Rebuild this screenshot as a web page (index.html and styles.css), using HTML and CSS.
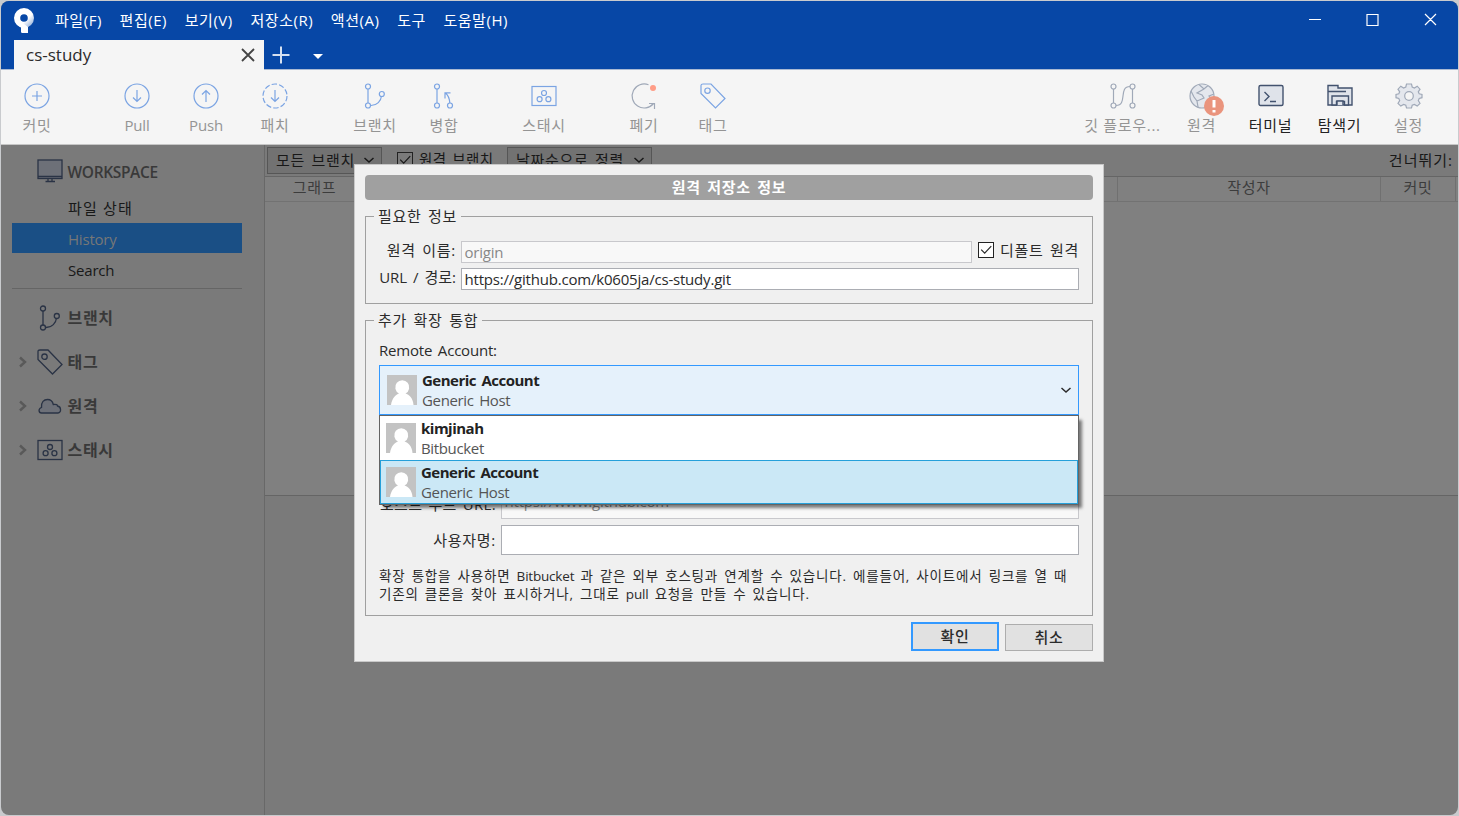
FILE: index.html
```html
<!DOCTYPE html>
<html lang="ko">
<head>
    <meta charset="UTF-8">
    <meta name="viewport" content="width=device-width, initial-scale=1.0">
    <title>cs-study</title>
    <link rel="stylesheet" href="styles.css">
</head>
<body>
    <!-- Shared icons -->
    <svg class="defs" width="0" height="0">
        <symbol id="branch" viewBox="0 0 26 26">
            <path d="M6 6v14M9 22.500C15 22.500 19 18 19.500 13"/>
            <circle cx="6" cy="3.500" r="2.500"/><circle cx="6" cy="22.500" r="2.500"/><circle cx="19.800" cy="11" r="2.500"/>
        </symbol>
        <symbol id="tag" viewBox="0 0 26 26">
            <path class="fill" d="M1 2.500Q1 1 3 1H11L25 15.500L15.500 25L1 10.500Z"/>
            <circle cx="7.500" cy="7.700" r="2.700"/>
        </symbol>
        <symbol id="stash" viewBox="0 0 26 26">
            <rect class="fill" x="1" y="3.500" width="24" height="19"/>
            <circle cx="13" cy="10" r="2.500"/><circle cx="8.600" cy="16.200" r="2.500"/><circle cx="17.400" cy="16.200" r="2.500"/>
        </symbol>
        <symbol id="avatar" viewBox="0 0 30 30">
            <rect width="30" height="30" fill="#c3c3c3"/>
            <path d="M4 30C5 23 9 19.500 12 18.500A7 7 0 1 1 18.500 18.500C22 19.500 26 23 26.500 30Z" fill="#fff"/>
        </symbol>
        <symbol id="down" viewBox="0 0 12 8"><path d="M1.500 2L6 6L10.500 2"/></symbol>
        <symbol id="right" viewBox="0 0 8 12"><path d="M1 1.500L6 6L1 10.500"/></symbol>
        <symbol id="check" viewBox="0 0 16 16"><path d="M2.500 7.500L6.500 11.500L14 3.500"/></symbol>
    </svg>

    <div class="window">
        <!-- Title bar -->
        <header class="titlebar">
            <svg class="logo" viewBox="0 0 20 26">
                <defs><linearGradient id="shade" x1="0" y1="0" x2="1" y2="1"><stop offset=".6" stop-color="#fff"/><stop offset="1" stop-color="#6f96cf"/></linearGradient></defs>
                <path fill="url(#shade)" fill-rule="evenodd" d="M10 0A10 10 0 1 1 10 20A10 10 0 1 1 10 0M10 6.200A3.800 3.800 0 1 0 10 13.800A3.800 3.800 0 1 0 10 6.200"/>
                <path fill="#fff" d="M2 15.500L8 14.500L14 19V24.500Q14 25 13.500 25H8.500Q7 25 7 24V19.500Z"/>
            </svg>
            <nav class="menu">
                <span>파일(F)</span><span>편집(E)</span><span>보기(V)</span><span>저장소(R)</span><span>액션(A)</span><span>도구</span><span>도움말(H)</span>
            </nav>
            <svg class="win-buttons" viewBox="0 0 128 14">
                <path d="M0 7.500H12M58 2.500h11v11h-11ZM116 2l11 11M127 2l-11 11"/>
            </svg>
        </header>
        <div class="tabs">
            <div class="tab">
                <span>cs-study</span>
                <svg class="tab-close" viewBox="0 0 14 14"><path d="M1 1l12 12M13 1L1 13"/></svg>
            </div>
            <svg class="tab-add" viewBox="0 0 18 18"><path d="M9 0.500V17.500M0.500 9H17.500"/></svg>
            <i class="caret"></i>
        </div>

        <!-- Toolbar -->
        <div class="toolbar">
            <div class="group">
                <div class="tool"><svg viewBox="0 0 26 26"><circle cx="13" cy="13" r="12"/><path d="M13 8v10M8 13h10"/></svg>커밋</div>
            </div>
            <div class="group">
                <div class="tool en"><svg viewBox="0 0 26 26"><circle cx="13" cy="13" r="12"/><path d="M13 7v11.500M9 14.500l4 4l4-4"/></svg>Pull</div>
                <div class="tool en"><svg viewBox="0 0 26 26"><circle cx="13" cy="13" r="12"/><path d="M13 19V7.500M9 11.500l4-4l4 4"/></svg>Push</div>
                <div class="tool"><svg viewBox="0 0 26 26"><circle cx="13" cy="13" r="12" stroke-dasharray="5.400 2.140"/><path d="M13 7v11.500M9 14.500l4 4l4-4"/></svg>패치</div>
            </div>
            <div class="group">
                <div class="tool"><svg><use href="#branch"/></svg>브랜치</div>
                <div class="tool"><svg viewBox="0 0 26 26"><path d="M6 6v14M18.800 20C18.500 15 17 12 14.500 10M14 15.500V9.800H19.500"/><circle cx="6" cy="3.500" r="2.500"/><circle cx="6" cy="22.500" r="2.500"/><circle cx="19" cy="22.500" r="2.500"/></svg>병합</div>
            </div>
            <div class="group">
                <div class="tool"><svg><use href="#stash"/></svg>스태시</div>
            </div>
            <div class="group">
                <div class="tool gray"><svg viewBox="0 0 26 26"><path d="M17.500 1.800A12 12 0 1 0 22.500 20.500M18 20.500H23.500V26"/><circle cx="22" cy="5" r="3" fill="#ff9d87" stroke="none"/></svg>폐기</div>
                <div class="tool"><svg><use href="#tag"/></svg>태그</div>
            </div>
            <div class="group right">
                <div class="tool gray wide"><svg viewBox="0 0 26 26"><path d="M3.500 6v14M22.500 6v14M6 22.500C18 22.500 8 3.500 20 3.500"/><circle cx="3.500" cy="3.500" r="2.500"/><circle cx="3.500" cy="22.500" r="2.500"/><circle cx="22.500" cy="3.500" r="2.500"/><circle cx="22.500" cy="22.500" r="2.500"/></svg>깃 플로우...</div>
                <div class="tool gray"><svg class="filled" viewBox="0 0 26 26"><circle cx="13" cy="13" r="12"/><path d="M10 1.500L15 6L19 2.500M15 6L8 10L13 12L15 15L8 18L9 24M2 8L5 14L8 18M25 11L20 13L23 17L19 19"/><circle cx="25" cy="23" r="10" fill="#ea947d" stroke="none"/><path d="M25 17v7.500M25 27v2.500" stroke="#fff" stroke-width="3"/></svg>원격</div>
                <div class="tool dark"><svg class="filled" viewBox="0 0 26 26"><rect x="1" y="2.500" width="24" height="20" rx="1.500"/><path d="M6.500 9l4.500 4.500L6.500 18" fill="none"/><path d="M12 18.500h6"/></svg>터미널</div>
                <div class="tool dark"><svg class="filled" viewBox="0 0 26 26"><path d="M1 2.500H11V5H25V22H1ZM1 8.500H19"/><path d="M5 22V13H21.500V22H17.500V18.500H9.500V22Z"/><path d="M10 22v-4h6v4"/></svg>탐색기</div>
                <div class="tool gray"><svg class="filled" viewBox="0 0 26 26"><path d="M10.500 1h5l.7 3 2.200 1 2.800-1.800 2.800 3-1.700 2.600.9 2 2.800.7v3.200l-2.800.7-.9 2.200 1.700 2.700-2.800 2.800-2.800-1.700-2.200.9-.7 2.700h-5l-.7-2.700-2.200-.9-2.800 1.700L2 20.300l1.700-2.700-.9-2.200L0 14.700v-3.200l2.800-.7.9-2L2 6.200l2.800-3L7.600 5l2.200-1Z"/><circle cx="13" cy="13" r="4.300" fill="#f5f5f5"/></svg>설정</div>
            </div>
        </div>

        <div class="main">
            <!-- Sidebar -->
            <aside class="sidebar">
                <div class="section workspace">
                    <svg class="icon" viewBox="0 0 26 26"><rect class="fill" x="1" y="2" width="24" height="18.500"/><path d="M1 18.500h24M11 21v2M15 21v2M8.500 23.500h9.500"/></svg>
                    <b>WORKSPACE</b>
                </div>
                <div class="entry first">파일 상태</div>
                <div class="entry selected en">History</div>
                <div class="entry en">Search</div>
                <hr>
                <div class="section"><svg class="icon"><use href="#branch"/></svg><b>브랜치</b></div>
                <div class="section"><svg class="arrow"><use href="#right"/></svg><svg class="icon"><use href="#tag"/></svg><b>태그</b></div>
                <div class="section"><svg class="arrow"><use href="#right"/></svg><svg class="icon" viewBox="0 0 26 26"><path class="fill" d="M4.500 20C1.500 20 1 15.500 4.500 14.500C4 9 7 6.500 10.500 6.500C13.500 6.500 15.500 8 16.300 11.500C19.500 11 20.500 12 20.500 13C24.500 13.500 24.500 20 21 20Z"/></svg><b>원격</b></div>
                <div class="section"><svg class="arrow"><use href="#right"/></svg><svg class="icon"><use href="#stash"/></svg><b>스태시</b></div>
            </aside>

            <!-- History list -->
            <section class="history">
                <div class="filters">
                    <div class="select">모든 브랜치<svg class="down"><use href="#down"/></svg></div>
                    <div class="check"><svg class="box"><use href="#check"/></svg>원격 브랜치</div>
                    <div class="select sort">날짜순으로 정렬<svg class="down"><use href="#down"/></svg></div>
                    <span class="jump">건너뛰기:</span>
                </div>
                <div class="columns">
                    <div class="graph">그래프</div>
                    <div class="desc"></div>
                    <div class="author">작성자</div>
                    <div class="commit">커밋</div>
                </div>
                <div class="rows"></div>
                <div class="detail"></div>
            </section>
        </div>
    </div>

    <!-- Remote dialog -->
    <div class="dialog">
        <h2>원격 저장소 정보</h2>
        <fieldset class="required">
            <legend>필요한 정보</legend>
            <div class="row">
                <label>원격 이름:</label>
                <div class="input disabled en">origin</div>
                <div class="check default"><svg class="box"><use href="#check"/></svg>디폴트 원격</div>
            </div>
            <div class="row">
                <label class="url">URL / 경로:</label>
                <div class="input en">https://github.com/k0605ja/cs-study.git</div>
            </div>
        </fieldset>
        <fieldset class="extended">
            <legend>추가 확장 통합</legend>
            <div class="account-label en">Remote Account:</div>
            <div class="combo">
                <svg class="avatar"><use href="#avatar"/></svg>
                <div class="account"><b>Generic Account</b><span>Generic Host</span></div>
                <svg class="down"><use href="#down"/></svg>
                <div class="popup">
                    <div class="option">
                        <svg class="avatar"><use href="#avatar"/></svg>
                        <div class="account"><b>kimjinah</b><span>Bitbucket</span></div>
                    </div>
                    <div class="option active">
                        <svg class="avatar"><use href="#avatar"/></svg>
                        <div class="account"><b>Generic Account</b><span>Generic Host</span></div>
                    </div>
                </div>
            </div>
            <div class="row tall host">
                <label>호스트 루트 URL:</label>
                <div class="input disabled en">https://www.github.com</div>
            </div>
            <div class="row tall">
                <label>사용자명:</label>
                <div class="input"></div>
            </div>
            <p>확장 통합을 사용하면 <span class="en">Bitbucket</span> 과 같은 외부 호스팅과 연계할 수 있습니다. 에를들어, 사이트에서 링크를 열 때<br>기존의 클론을 찾아 표시하거나, 그대로 <span class="en">pull</span> 요청을 만들 수 있습니다.</p>
        </fieldset>
        <div class="buttons">
            <button class="ok">확인</button>
            <button>취소</button>
        </div>
    </div>
</body>
</html>
```
FILE: styles.css
```css
* {
    box-sizing: border-box;
}

body {
    margin: 0;
    height: 816px;
    padding: 1px;
    overflow: hidden;
    position: relative;
    background-color: #c9cbce;
    font-family: "Open Sans", "Noto Sans CJK KR", sans-serif;
    font-size: 15px;
    line-height: 20px;
    letter-spacing: 0.7px;
    color: #2b2b2b;
    white-space: nowrap;
}

svg {
    display: block;
    flex: none;
    fill: none;
    stroke: currentColor;
    overflow: visible;
}

.defs {
    position: absolute;
}

b {
    font-weight: 600;
}

/* Latin text runs tighter than hangul */
.en {
    letter-spacing: -0.2px;
}

.window {
    height: 814px;
    display: flex;
    flex-direction: column;
    border-radius: 8px;
    overflow: hidden;
    background-color: #7a7a7a;
}

/* Title bar */
.titlebar {
    height: 39px;
    padding: 0 21px 0 13px;
    display: flex;
    align-items: center;
    background-color: #0747a6;
    color: white;
}

.logo {
    width: 20px;
    height: 26px;
    stroke: none;
}

.menu {
    display: flex;
    gap: 17.6px;
    margin-left: 21px;
    margin-top: -2px;
    font-size: 15px;
    letter-spacing: 0.55px;
}

.win-buttons {
    width: 128px;
    height: 14px;
    margin-left: auto;
    margin-top: -4px;
    stroke-width: 1.2;
}

.tabs {
    height: 30px;
    display: flex;
    align-items: center;
    padding-left: 13px;
    background-color: #0747a6;
    border-bottom: 1px solid #a9b9d3;
}

.tab {
    width: 250px;
    height: 30px;
    margin-bottom: -1px;
    padding: 0 9px 0 12px;
    display: flex;
    align-items: center;
    justify-content: space-between;
    background-color: #f5f5f5;
    font-size: 17px;
    letter-spacing: 0;
}

.tab-close {
    width: 14px;
    height: 14px;
    stroke: #444;
    stroke-width: 1.8;
}

.tab-add {
    width: 18px;
    height: 18px;
    margin-left: 8px;
    stroke: #d5e0f0;
    stroke-width: 2;
}

.caret {
    margin-left: 23px;
    margin-top: 3px;
    border: 5px solid transparent;
    border-top-color: white;
    border-bottom: 0;
}

/* Toolbar */
.toolbar {
    height: 75px;
    display: flex;
    gap: 31px;
    padding: 0 15px 0 1.5px;
    background-color: #f5f5f5;
    border-bottom: 1px solid #c6c6c6;
    color: #949494;
}

.group {
    display: flex;
}

.group.right {
    margin-left: auto;
}

.tool {
    width: 69px;
    padding-top: 13px;
    display: flex;
    flex-direction: column;
    align-items: center;
    gap: 6px;
}

.tool.wide {
    width: 89px;
}

.tool svg {
    width: 26px;
    height: 26px;
    stroke: #7ba4e3;
    stroke-width: 1.2;
}

.tool.gray svg {
    stroke: #a0a9b8;
}

.tool .filled {
    fill: #e4e7ed;
}

.tool.dark {
    color: #222;
}

.tool.dark svg {
    stroke: #42526e;
    fill: #dfe3ea;
    stroke-width: 1.4;
}

/* Main area */
.main {
    flex: 1;
    display: flex;
}

.sidebar {
    width: 264px;
    padding: 5px 22px 0 11px;
    border-right: 1px solid #686868;
}

.section {
    height: 44px;
    padding-left: 24.5px;
    display: flex;
    align-items: center;
    color: #393939;
}

.section b {
    margin-left: 5px;
    font-size: 16px;
}

.workspace b {
    font-size: 15.5px;
    letter-spacing: -0.35px;
    margin-top: 0;
}

.workspace .icon {
    margin-top: -2px;
}

.section .icon {
    width: 26px;
    height: 26px;
    stroke: #2a3345;
    stroke-width: 1.3;
}

.section .fill {
    fill: #6d7078;
}

.arrow {
    width: 8px;
    height: 12px;
    margin-left: -18px;
    margin-right: 10px;
    stroke: #595959;
    stroke-width: 2.4;
}

.entry {
    height: 30px;
    margin-bottom: 1px;
    padding-left: 56px;
    line-height: 33px;
    color: #181818;
}

.first {
    margin-top: -2px;
    line-height: 32px;
    letter-spacing: 1.2px;
}

.selected {
    background-color: #1a4f85;
    color: #777;
}

.sidebar hr {
    margin: 4px 0 7px;
    border: 0;
    border-top: 1px solid #656565;
}

.history {
    flex: 1;
    display: flex;
    flex-direction: column;
}

.filters {
    height: 32px;
    padding: 2px 5px 3px 2px;
    display: flex;
    align-items: center;
    border-bottom: 1px solid #656565;
    color: #181818;
}

.select {
    width: 115px;
    height: 27px;
    padding: 0 6px 0 8px;
    display: flex;
    align-items: center;
    justify-content: space-between;
    border: 1px solid #565656;
    background-color: #727272;
    word-spacing: 2px;
}

.sort {
    width: 145px;
    margin-left: 15px;
}

.down {
    width: 12px;
    height: 8px;
    stroke-width: 1.5;
}

.check {
    display: flex;
    align-items: center;
    word-spacing: 2px;
}

.box {
    width: 16px;
    height: 16px;
    margin-right: 6px;
    border: 1px solid #222;
    stroke-width: 1.4;
}

.filters .check {
    margin-left: 15px;
    width: 95px;
    font-size: 14.5px;
    letter-spacing: 0.3px;
}

.jump {
    margin-left: auto;
    letter-spacing: 1px;
}

.columns {
    height: 25px;
    display: flex;
    background-color: #808080;
    border-bottom: 1px solid #727272;
    color: #3c3c3c;
    line-height: 21px;
    text-align: center;
}

.graph {
    width: 99px;
}

.desc {
    flex: 1;
}

.author {
    width: 263px;
    border-left: 1px solid #707070;
}

.commit {
    width: 76px;
    margin-right: 2px;
    border: 0 solid #707070;
    border-width: 0 1px;
}

.rows {
    height: 294px;
    background-color: #808080;
    border-bottom: 1px solid #656565;
}

/* Remote dialog */
.dialog {
    position: absolute;
    left: 354px;
    top: 164px;
    width: 750px;
    height: 498px;
    padding: 10px;
    background-color: #f0f0f0;
    border: 1px solid #c8c8c8;
}

.dialog h2 {
    height: 25px;
    margin: 0 0 6px;
    border-radius: 4px;
    background-color: #a0a0a0;
    color: white;
    font-size: 15px;
    line-height: 24px;
    text-align: center;
    font-weight: bold;
    word-spacing: 2px;
}

fieldset {
    margin: 0;
    padding: 0 13px 0 8px;
    border: 1px solid #a0a0a0;
}

legend {
    height: 21px;
    padding: 0 4px;
    line-height: 20px;
    word-spacing: 2px;
}

.required {
    height: 98px;
    margin-bottom: 6px;
}

.extended {
    height: 306px;
    padding-left: 13px;
}

.extended legend {
    margin-left: -5px;
}

.required .row:nth-of-type(1) {
    margin-top: 14px;
}

.row {
    display: flex;
    margin-bottom: 5px;
}

.row label {
    width: 82px;
    margin-right: 5px;
    text-align: right;
    line-height: 19px;
    word-spacing: 2px;
}

.row .url {
    letter-spacing: 0;
}

.input {
    flex: 1;
    height: 22px;
    padding-left: 2.5px;
    border: 1px solid #abadb3;
    background-color: white;
    line-height: 21px;
}

.disabled {
    background-color: #f8f8f8;
    border-color: #c8c8cc;
    color: #888;
}

.default {
    margin: -4px 0 0 6px;
    width: 101px;
}

.default .box {
    background-color: white;
}

.account-label {
    height: 34px;
    line-height: 38px;
    word-spacing: 2px;
}

.combo {
    position: relative;
    height: 50px;
    padding: 0 6px 0 7px;
    display: flex;
    align-items: center;
    background-color: #e5f1fb;
    border: 1px solid #3399ff;
    letter-spacing: -0.35px;
}

.combo > .down {
    margin-left: auto;
}

.avatar {
    width: 30px;
    height: 30px;
    stroke: none;
}

.account {
    margin-left: 5px;
    display: flex;
    flex-direction: column;
    word-spacing: 2px;
    color: #555;
}

.account b {
    color: #222;
    font-weight: bold;
    letter-spacing: -0.5px;
}

.popup {
    position: absolute;
    left: -1px;
    top: 49px;
    width: 700px;
    height: 90px;
    background-color: white;
    border: 1px solid #646464;
    box-shadow: 4px 4px 3px -1px rgba(0, 0, 0, 0.5);
}

.option {
    height: 44px;
    padding: 0 6px;
    display: flex;
    align-items: center;
}

.active {
    padding: 0 5px;
    background-color: #cbe8f6;
    border: 1px solid #26a0da;
}

.tall {
    margin-bottom: 6px;
}

.tall label {
    width: 117px;
    line-height: 30px;
}

.host label {
    letter-spacing: 0.3px;
}

.tall .input {
    height: 30px;
    line-height: 23px;
}

.host {
    margin-top: 74px;
}

.extended p {
    margin: 12px 0 0;
    font-size: 13.5px;
    line-height: 18px;
    letter-spacing: 0.8px;
    word-spacing: 1.9px;
}

.extended p .en {
    letter-spacing: -0.2px;
}

.buttons {
    display: flex;
    justify-content: flex-end;
    align-items: flex-end;
    gap: 6px;
    margin-top: 6px;
}

button {
    width: 88px;
    height: 27px;
    padding: 0 0 2px;
    border: 1px solid #adadad;
    background-color: #e1e1e1;
    color: #2b2b2b;
    font: 500 15px "Open Sans", "Noto Sans CJK KR", sans-serif;
    letter-spacing: 0.7px;
}

.ok {
    height: 29px;
    border: 2px solid #3399ff;
}
```
